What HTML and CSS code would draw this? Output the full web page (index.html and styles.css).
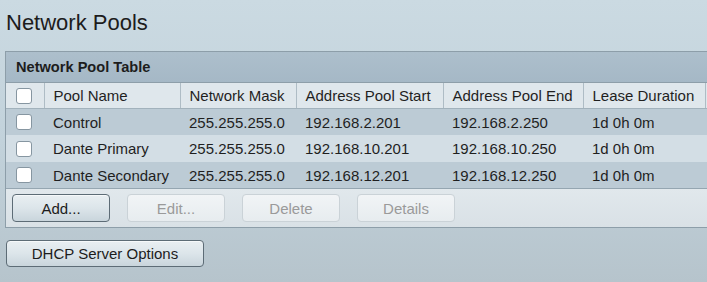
FILE: index.html
```html
<!DOCTYPE html>
<html>
<head>
<meta charset="utf-8">
<link rel="stylesheet" href="styles.css">
</head>
<body>
<h1 class="title">Network Pools</h1>
<div class="panel">
  <div class="caption">Network Pool Table</div>
  <table class="grid">
    <colgroup>
      <col class="c-chk"><col class="c-name"><col class="c-mask"><col class="c-start"><col class="c-end"><col class="c-lease"><col class="c-rest">
    </colgroup>
    <thead>
      <tr class="head">
        <th><span class="chk"></span></th>
        <th>Pool Name</th>
        <th>Network Mask</th>
        <th>Address Pool Start</th>
        <th>Address Pool End</th>
        <th>Lease Duration</th>
        <th></th>
      </tr>
    </thead>
    <tbody>
      <tr class="odd first">
        <td><span class="chk"></span></td>
        <td>Control</td><td>255.255.255.0</td><td>192.168.2.201</td><td>192.168.2.250</td><td>1d 0h 0m</td><td></td>
      </tr>
      <tr class="even">
        <td><span class="chk"></span></td>
        <td>Dante Primary</td><td>255.255.255.0</td><td>192.168.10.201</td><td>192.168.10.250</td><td>1d 0h 0m</td><td></td>
      </tr>
      <tr class="odd last">
        <td><span class="chk"></span></td>
        <td>Dante Secondary</td><td>255.255.255.0</td><td>192.168.12.201</td><td>192.168.12.250</td><td>1d 0h 0m</td><td></td>
      </tr>
    </tbody>
  </table>
  <div class="actions">
    <button class="btn">Add...</button>
    <button class="btn disabled">Edit...</button>
    <button class="btn disabled">Delete</button>
    <button class="btn disabled">Details</button>
  </div>
</div>
<div class="bottom">
  <button class="btn wide">DHCP Server Options</button>
</div>
</body>
</html>
```

FILE: styles.css
```css
html, body {
  margin: 0;
  padding: 0;
  height: 100%;
  overflow: hidden;
}
body {
  background: linear-gradient(#cbdae2 0%, #c2d2db 50%, #b6c4cc 100%);
  font-family: "Liberation Sans", Arial, sans-serif;
  color: #1e1e1e;
}
.title {
  margin: 0;
  padding: 10px 0 0 6px;
  height: 51px;
  box-sizing: border-box;
  font-size: 22px;
  font-weight: normal;
  line-height: 26px;
  color: #1c1c1c;
}
.panel {
  margin-left: 5px;
  width: 730px;
  border: 1px solid #8d9ea9;
  border-right: none;
  background: #dbe3e8;
}
.caption {
  height: 30px;
  line-height: 30px;
  padding-left: 10px;
  font-size: 14.6px;
  font-weight: bold;
  color: #1d1d1d;
  background: linear-gradient(#adbfcc, #a5b8c6);
  border-bottom: 1px solid #8d9ea9;
}
.grid {
  border-collapse: collapse;
  table-layout: fixed;
  width: 730px;
  font-size: 15px;
}
.c-chk { width: 38px; }
.c-name { width: 136px; }
.c-mask { width: 116px; }
.c-start { width: 147px; }
.c-end { width: 140px; }
.c-lease { width: 122px; }
.grid th, .grid td {
  text-align: left;
  font-weight: normal;
  padding: 0 0 0 9px;
  white-space: nowrap;
  color: #1f1f1f;
}
.grid th:first-child, .grid td:first-child {
  padding: 0 0 0 10px;
}
.head th {
  height: 25px;
  background: #dfe7ec;
  border-left: 1px solid #aebcc5;
  border-bottom: 1px solid #a2b2bc;
}
.head th:first-child { border-left: none; }
.grid tbody td { height: 27px; }
.grid tbody tr.first td { height: 26px; }
.odd td { background: #bccbd5; }
.even td { background: #d3dee5; }
.grid tbody tr.last td {
  height: 26px;
  border-bottom: 1px solid #95a6b1;
}
.chk {
  display: block;
  width: 14px;
  height: 14px;
  border: 1px solid #8696a1;
  border-radius: 3px;
  background: #fff;
}
.actions {
  display: flex;
  gap: 17px;
  padding: 5px 0 5px 6px;
  background: linear-gradient(#e1e8ec, #d9e1e6);
}
.btn {
  width: 98px;
  height: 28px;
  font-family: "Liberation Sans", Arial, sans-serif;
  font-size: 15px;
  color: #1c1c1c;
  border: 1px solid #5d6c76;
  border-radius: 4px;
  background: linear-gradient(#e9eff2 0%, #dce5ea 50%, #c9d5dc 100%);
  padding: 0;
  box-shadow: inset 0 1px 0 #f6f9fa;
}
.btn.disabled {
  color: #9a9a9a;
  border-color: #cad2d7;
  background: linear-gradient(#f1f4f6, #e7ecef);
  box-shadow: none;
}
.bottom {
  padding: 12px 0 0 6px;
}
.btn.wide {
  width: 198px;
  height: 27px;
}
```
